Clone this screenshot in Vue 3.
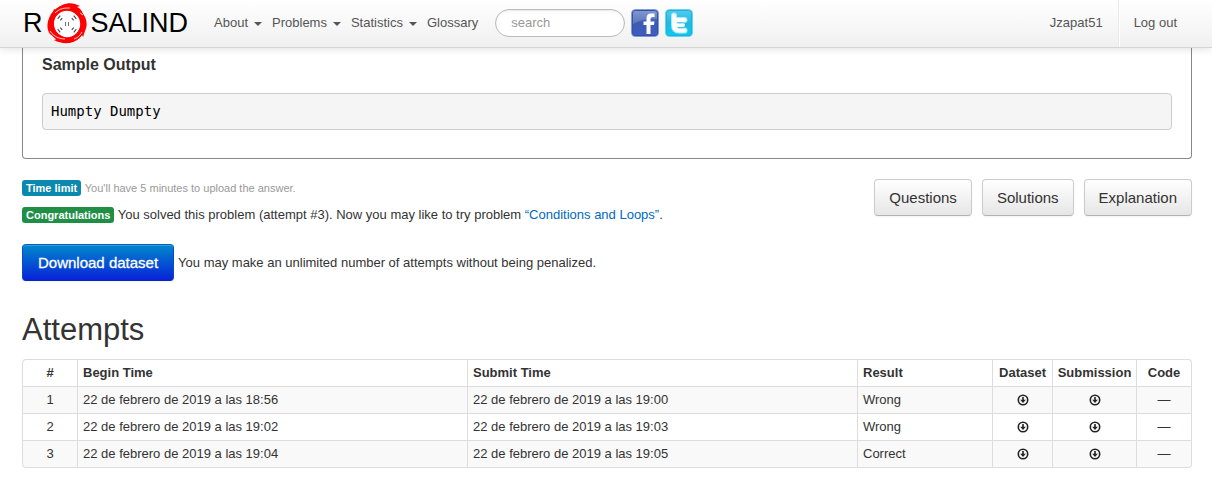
<script setup>
const menu = [
  { label: 'About', caret: true },
  { label: 'Problems', caret: true },
  { label: 'Statistics', caret: true },
  { label: 'Glossary', caret: false }
]
const views = ['Questions', 'Solutions', 'Explanation']
const attempts = [
  { id: 1, begin: '22 de febrero de 2019 a las 18:56', submit: '22 de febrero de 2019 a las 19:00', result: 'Wrong' },
  { id: 2, begin: '22 de febrero de 2019 a las 19:02', submit: '22 de febrero de 2019 a las 19:03', result: 'Wrong' },
  { id: 3, begin: '22 de febrero de 2019 a las 19:04', submit: '22 de febrero de 2019 a las 19:05', result: 'Correct' }
]
const dashAngles = [50, 130, 230, 310]
</script>

<template>
  <div class="page">
    <header class="navbar">
      <a class="logo" href="#" aria-label="Rosalind">
        <span>R</span>
        <svg class="ring" viewBox="0 0 40 42" aria-hidden="true">
          <circle cx="20" cy="22" r="16" fill="#fff" stroke="#f00" stroke-width="5.500" />
          <g fill="#f00">
            <path d="M5 13 L7 7 L9 8 C13 2 22 0 28 2 L33 4 L30 5 C33 6 35 9 36 12 L30 13 C25 7 18 7 12 10 L7 16 Z" />
            <path d="M34 10 C40 15 41 23 38 29 L36 35 L35 33 L31 36 L30 31 C35 25 35 17 31 12 Z" />
            <path d="M4 14 C0 18 -1 27 3 32 L10 37 L7 38 C14 42 23 42 28 39 L33 36 C27 38 20 38 15 34 C8 31 5 23 8 15 Z" />
          </g>
          <path d="M8 11 C13 6 18 6 23 6 M3 29 C7 35 13 37 18 37 M36 13 L33 11 M35 30 C33 34 30 36 27 37" fill="none" stroke="#fff" stroke-width="0.800" />
          <g fill="none" stroke="#444" stroke-width="1.100">
            <path
              v-for="a in dashAngles"
              :key="a"
              :transform="`rotate(${a} 20 22)`"
              d="M18 11.500 H22 M18.500 14.500 H21.500"
            />
            <path d="M18.500 20 V24 M21.500 20 V24" stroke="#777" />
          </g>
        </svg>
        <span>SALIND</span>
      </a>
      <nav class="menu">
        <a v-for="item in menu" :key="item.label" href="#">
          {{ item.label }}<i v-if="item.caret" class="caret"></i>
        </a>
      </nav>
      <input class="search" type="text" placeholder="search" aria-label="search" />
      <a class="social" href="#" aria-label="Facebook">
        <svg viewBox="0 0 28 28" aria-hidden="true">
          <defs>
            <linearGradient id="fb" x1="0" y1="0" x2="0" y2="1">
              <stop offset="0" stop-color="#6985c9" />
              <stop offset="0.500" stop-color="#3c5ab0" />
              <stop offset="1" stop-color="#3e5fc4" />
            </linearGradient>
          </defs>
          <rect x="0.500" y="0.500" width="27" height="27" rx="4" fill="url(#fb)" stroke="#7f9bdb" />
          <rect x="1.500" y="1.500" width="25" height="25" rx="3" fill="none" stroke="#3553a5" />
          <path d="M2 15 Q13 9 26 10 V4 Q26 2 24 2 H4 Q2 2 2 4 Z" fill="#fff" opacity="0.180" />
          <path d="M15.500 25 V16 H12.500 V12.500 H15.500 V9.500 Q15.500 4.500 20 4.500 H23.500 V8 H21.500 Q19.500 8 19.500 10 V12.500 H23.500 L23 16 H19.500 V25 Z" fill="#fff" />
        </svg>
      </a>
      <a class="social" href="#" aria-label="Twitter">
        <svg viewBox="0 0 28 28" aria-hidden="true">
          <defs>
            <linearGradient id="tw" x1="0" y1="0" x2="0" y2="1">
              <stop offset="0" stop-color="#57cdee" />
              <stop offset="0.500" stop-color="#20b9e4" />
              <stop offset="1" stop-color="#08cbee" />
            </linearGradient>
          </defs>
          <rect x="0.500" y="0.500" width="27" height="27" rx="4" fill="url(#tw)" stroke="#67d4ef" />
          <rect x="1.500" y="1.500" width="25" height="25" rx="3" fill="none" stroke="#20b0da" />
          <g fill="none" stroke-linecap="round" stroke-linejoin="round">
            <path d="M9 6.500 V16 Q9 21.500 14 21.500 H19.500 M9 11 H19.500" stroke="#a5edf8" stroke-width="6" />
            <path d="M9 6.500 V16 Q9 21.500 14 21.500 H19.500 M9 11 H19.500 M10 15 Q12 16.500 18 16" stroke="#fff" stroke-width="4" />
            <path d="M12.500 13.800 H19 M13.500 18.700 H19" stroke="#36c5e8" stroke-width="1" />
          </g>
        </svg>
      </a>
      <div class="account">
        <a href="#">Jzapat51</a>
        <a href="#" class="logout">Log out</a>
      </div>
    </header>

    <main>
      <section class="problem">
        <h2>Sample Output</h2>
        <pre>Humpty Dumpty</pre>
      </section>

      <section class="status">
        <div class="messages">
          <p class="limit"><span class="tag info">Time limit</span> <small>You'll have 5 minutes to upload the answer.</small></p>
          <p><span class="tag success">Congratulations</span> You solved this problem (attempt #3). Now you may like to try problem <a href="#">“Conditions and Loops”</a>.</p>
        </div>
        <div class="views">
          <button v-for="v in views" :key="v" type="button" class="btn">{{ v }}</button>
        </div>
      </section>

      <div class="download">
        <button type="button" class="btn primary">Download dataset</button>
        <span>You may make an unlimited number of attempts without being penalized.</span>
      </div>

      <h1>Attempts</h1>
      <table>
        <colgroup>
          <col class="w-id" /><col /><col /><col class="w-result" /><col class="w-dataset" /><col class="w-submission" /><col class="w-id" />
        </colgroup>
        <thead>
          <tr>
            <th class="center">#</th>
            <th>Begin Time</th>
            <th>Submit Time</th>
            <th>Result</th>
            <th class="center">Dataset</th>
            <th class="center">Submission</th>
            <th class="center">Code</th>
          </tr>
        </thead>
        <tbody>
          <tr v-for="a in attempts" :key="a.id">
            <td class="center">{{ a.id }}</td>
            <td>{{ a.begin }}</td>
            <td>{{ a.submit }}</td>
            <td>{{ a.result }}</td>
            <td v-for="kind in ['dataset', 'submission']" :key="kind" class="center">
              <a class="get" href="#" :aria-label="`Download ${kind} ${a.id}`">
                <svg viewBox="0 0 12 12" aria-hidden="true">
                  <circle cx="6" cy="6" r="4.700" fill="none" stroke="#222" stroke-width="1.600" />
                  <path d="M5.200 3 H6.800 V5.700 H8.800 L6 8.900 L3.200 5.700 H5.200 Z" fill="#222" />
                </svg>
              </a>
            </td>
            <td class="center">—</td>
          </tr>
        </tbody>
      </table>
    </main>
  </div>
</template>

<style>
body {
  background: #fff;
}
</style>

<style scoped>
.page {
  font: 13px/18px "Liberation Sans", Arial, sans-serif;
  color: #333;
}
a {
  text-decoration: none;
}
.navbar {
  position: relative;
  display: flex;
  align-items: center;
  box-sizing: border-box;
  height: 48px;
  padding: 0 0 2px 23px;
  background: linear-gradient(#fff, #f0f0f0);
  border-bottom: 1px solid #d4d4d4;
  box-shadow: 0 1px 8px rgba(0, 0, 0, 0.12);
}
.logo {
  display: flex;
  align-items: center;
  font-size: 27px;
  line-height: 32px;
  color: #000;
  margin-right: 26px;
}
.ring {
  width: 40px;
  height: 42px;
  margin: 0 4px;
}
.menu {
  display: flex;
  gap: 10px;
  margin-right: 17px;
}
.menu a,
.account a {
  color: #555;
}
.menu a {
  display: flex;
  align-items: center;
}
.caret {
  margin: 2px 0 0 6px;
  border: 4px solid transparent;
  border-top-color: #555;
  border-bottom: 0;
}
.search {
  box-sizing: border-box;
  width: 130px;
  height: 28px;
  padding: 0 15px;
  border: 1px solid #bbb;
  border-radius: 14px;
  background: #fff;
  box-shadow: inset 0 1px 2px rgba(0, 0, 0, 0.1);
  font: inherit;
  color: #555;
}
.search::placeholder {
  color: #999;
}
.social {
  width: 28px;
  height: 28px;
  margin-left: 6px;
}
.social svg,
.get svg {
  display: block;
}
.account {
  display: flex;
  align-self: stretch;
  margin: 0 0 -2px auto;
}
.account a {
  display: flex;
  align-items: center;
  padding: 0 15px 2px;
}
.account .logout {
  padding-right: 35px;
  border-left: 1px solid #e9e9e9;
  box-shadow: inset 1px 0 #fff;
}
main {
  padding: 0 20px 14px 22px;
}
.problem {
  padding: 6px 19px 28px;
  border: 1px solid #888;
  border-top: 0;
  border-radius: 0 0 4px 4px;
}
h2 {
  margin: 0 0 18px;
  font-size: 16px;
  line-height: 21px;
}
pre {
  margin: 0;
  padding: 8px;
  border: 1px solid #ccc;
  border-radius: 4px;
  background: #f5f5f5;
  font: 14px/19px "DejaVu Sans Mono", monospace;
  color: #000;
}
.status {
  display: flex;
  justify-content: space-between;
  align-items: flex-start;
  padding-top: 20px;
}
p {
  margin: 0 0 9px;
}
small {
  font-size: 11px;
  color: #999;
}
.messages a {
  color: #0069c2;
}
.tag {
  display: inline-block;
  padding: 1px 4px;
  border-radius: 3px;
  font-size: 11px;
  line-height: 14px;
  font-weight: bold;
  color: #fff;
}
.info {
  background: #0a88ae;
}
.success {
  background: #1f8f45;
}
.views {
  display: flex;
  gap: 10px;
}
.btn {
  padding: 8px 14px;
  border: 1px solid #ccc;
  border-bottom-color: #b3b3b3;
  border-radius: 4px;
  background: linear-gradient(#fff, #e6e6e6);
  box-shadow: 0 1px 2px rgba(0, 0, 0, 0.05);
  font: 15px/19px "Liberation Sans", Arial, sans-serif;
  color: #333;
}
.primary {
  padding: 8px 15px;
  border-color: #0a5cc4 #0a49c8 #0a25b8;
  background: linear-gradient(#0088cc, #0822d8);
  box-shadow: inset 0 1px rgba(255, 255, 255, 0.2), 0 1px 2px rgba(0, 0, 0, 0.05);
  -webkit-text-stroke: 0.300px #fff;
  color: #fff;
}
.download {
  display: flex;
  align-items: center;
  gap: 4px;
  margin-top: 11px;
}
h1 {
  margin: 31px 0 11px;
  font-size: 31px;
  line-height: 36px;
  font-weight: normal;
}
table {
  width: 100%;
  table-layout: fixed;
  border-collapse: separate;
  border-spacing: 0;
  border: 1px solid #ddd;
  border-left: 0;
  border-radius: 4px;
}
th,
td {
  padding: 4px 5px;
  border-left: 1px solid #ddd;
  text-align: left;
  white-space: nowrap;
}
td {
  border-top: 1px solid #ddd;
}
.center {
  padding: 4px 0;
  text-align: center;
}
tbody tr:nth-child(odd) td {
  background: #f9f9f9;
}
th:first-child {
  border-top-left-radius: 4px;
}
tr:last-child td:first-child {
  border-bottom-left-radius: 4px;
}
tr:last-child td:last-child {
  border-bottom-right-radius: 4px;
}
.w-id {
  width: 55px;
}
.w-result {
  width: 135px;
}
.w-dataset {
  width: 60px;
}
.w-submission {
  width: 84px;
}
.get {
  display: inline-block;
  width: 12px;
  height: 12px;
  vertical-align: -2px;
}
</style>
